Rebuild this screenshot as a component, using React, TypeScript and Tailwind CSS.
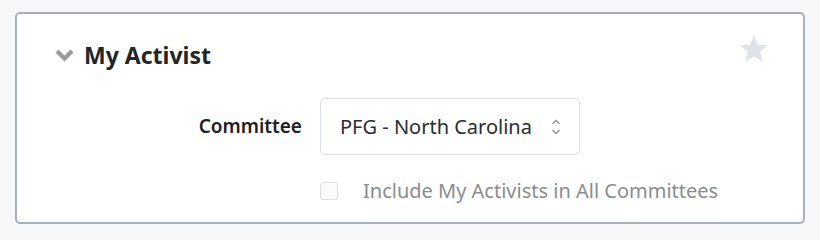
import React from "react";

export default function App() {
  return (
    <div className="w-[820px] h-[240px] bg-[#f6f7f9] pt-[12px] pl-[15px]" style={{ fontFamily: '"Noto Sans", "Open Sans", sans-serif' }}>
      <div className="w-[790px] h-[212px] bg-white border-2 border-[#aab0b7] rounded-[5px] relative">
        <div className="flex items-center pl-[38px] pt-[26px] h-[56px]">
          <svg width="19" height="13" viewBox="0 0 19 13" className="mr-[10px] mt-[1px]">
            <path d="M0.5 3.5 L3.5 0.5 L9.5 6.5 L15.5 0.5 L18.5 3.5 L9.5 12.5 Z" fill="#9a9a9a" />
          </svg>
          <span className="text-[23px] font-bold text-[#222529] leading-none">My Activist</span>
        </div>
        <svg width="32" height="30" viewBox="0 0 24 23" className="absolute left-[721px] top-[20px]">
          <path d="M12 0.8 L14.9 8.2 L22.8 8.6 L16.6 13.6 L18.7 21.3 L12 17 L5.3 21.3 L7.4 13.6 L1.2 8.6 L9.1 8.2 Z" fill="#dfe2e6" />
        </svg>
        <div className="flex items-center mt-[28px]">
          <div className="w-[285px] text-right text-[19px] font-semibold text-[#1d2024]">Committee</div>
          <div className="ml-[18px] w-[260px] h-[57px] border border-[#dcdfe3] rounded-[5px] flex items-center pl-[19px] pr-[18px] justify-between">
            <span className="text-[20px] text-[#2a2d31]">PFG - North Carolina</span>
            <svg width="10" height="18" viewBox="0 0 10 18">
              <path d="M1.5 6 L5 2.5 L8.5 6" stroke="#8a8f96" strokeWidth="1.3" fill="none" />
              <path d="M1.5 12 L5 15.5 L8.5 12" stroke="#8a8f96" strokeWidth="1.3" fill="none" />
            </svg>
          </div>
        </div>
        <div className="flex items-center mt-[25px] ml-[303px]">
          <div className="w-[18px] h-[18px] border border-[#dcdfe3] rounded-[3px] bg-[#fbfbfc]" />
          <span className="ml-[25px] text-[20px] leading-[22px] text-[#8a8c8f]">Include My Activists in All Committees</span>
        </div>
      </div>
    </div>
  );
}
